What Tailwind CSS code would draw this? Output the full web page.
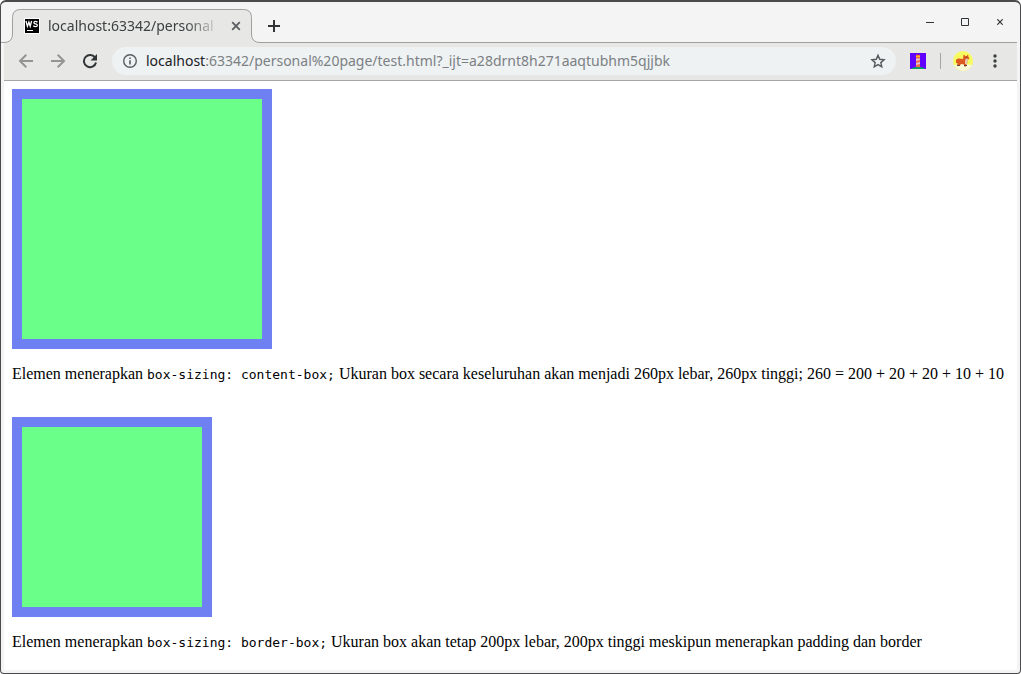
<!DOCTYPE html>
<html lang="id">
<head>
<meta charset="utf-8">
<meta name="viewport" content="width=device-width, initial-scale=1">
<title>Box sizing</title>
<script src="https://cdn.jsdelivr.net/npm/@tailwindcss/browser@4"></script>
</head>
<body class="bg-white">
<div class="flex min-h-screen flex-col rounded-t-md rounded-b-sm border border-t-2 border-[#4b4b4d] bg-[#f4f4f4] font-['Noto_Sans',sans-serif]">

  <header class="flex h-[41px] items-start justify-between">
    <div class="flex items-start">
      <div class="relative mt-[7px] h-[34px] w-[259px] shrink-0">
        <svg class="absolute inset-0" width="259" height="34" viewBox="0 0 259 34" aria-hidden="true">
          <path d="M0 33.500H3Q11.500 33.500 11.500 25V8.500Q11.500 .5 19.500 .5H242.500Q250.500 .5 250.500 8.500V25Q250.500 33.500 259 33.500V34H0Z" fill="#e7e7e5"/>
          <path d="M0 33.500H3Q11.500 33.500 11.500 25V8.500Q11.500 .5 19.500 .5H242.500Q250.500 .5 250.500 8.500V25Q250.500 33.500 259 33.500" fill="none" stroke="#a0a0a0"/>
        </svg>
        <div class="relative flex h-[34px] items-center pl-[23px]">
          <svg class="shrink-0" width="16" height="16" viewBox="0 0 16 16" role="img" aria-label="WebStorm">
            <rect width="16" height="16" fill="#fff"/><rect x="1" y="1" width="14" height="14" fill="#000"/>
            <path d="M2 3 3.400 8.300 4.900 4 6.200 8.300 7.600 3M13.500 4.200Q11.800 2.800 10.300 3.800 9.300 5 10.800 5.600L12.400 6.100Q14 7 12.800 8.200 11 9.200 9.300 7.700" fill="none" stroke="#fff" stroke-width="1.300"/>
            <path d="M3 12.500H9" stroke="#fff"/>
          </svg>
          <span class="ml-2 w-[172px] whitespace-nowrap mask-r-from-80% text-sm leading-5 text-[#3c4043]">localhost:63342/personal</span>
          <button class="ml-2 flex size-4 items-center justify-center" aria-label="Tutup tab">
            <svg width="10" height="10" viewBox="0 0 10 10" stroke="#5a5d60" stroke-width="1.800"><path d="m1.200 1.200 7.600 7.600M8.800 1.200 1.200 8.800"/></svg>
          </button>
        </div>
      </div>
      <button class="mt-4 flex h-4 w-6 shrink-0 items-center justify-center pl-1" aria-label="Tab baru">
        <svg width="12" height="12" viewBox="0 0 12 12" stroke="#303436" stroke-width="2"><path d="M6 0v12M0 6h12"/></svg>
      </button>
    </div>
    <div class="mt-3 flex gap-[19px] pr-3">
      <button class="flex size-4 items-center justify-center" aria-label="Kecilkan">
        <svg width="8" height="8" viewBox="0 0 8 8" stroke="#303436"><path d="M0 4.500h8"/></svg>
      </button>
      <button class="flex size-4 items-center justify-center" aria-label="Besarkan">
        <svg width="8" height="8" viewBox="0 0 8 8" fill="none" stroke="#303436"><path d="M.5.5h7v7h-7z"/></svg>
      </button>
      <button class="flex size-4 items-center justify-center" aria-label="Tutup">
        <svg width="6" height="6" viewBox="0 0 6 6" stroke="#303436" stroke-width="1.200"><path d="m.3.3 5.400 5.400M5.700.3.300 5.700"/></svg>
      </button>
    </div>
  </header>

  <nav class="mx-[3px] -mt-px flex h-[39px] items-center border-b border-[#a6a6a6] bg-[#e7e7e5] bg-[linear-gradient(#a0a0a0,#a0a0a0)] bg-[length:calc(100%-254px)_1px] bg-right-top bg-no-repeat pr-[14px] pl-[14px]" aria-label="Navigasi">
    <div class="flex shrink-0 gap-4">
      <button aria-label="Kembali"><svg width="16" height="16" viewBox="0 0 16 16" fill="none" stroke="#939493" stroke-width="2"><path d="M15 8H2.500M8.300 1.700 2 8l6.300 6.300"/></svg></button>
      <button aria-label="Maju"><svg width="16" height="16" viewBox="0 0 16 16" fill="none" stroke="#939493" stroke-width="2"><path d="M1 8h12.500M7.700 1.700 14 8l-6.300 6.300"/></svg></button>
      <button aria-label="Muat ulang"><svg width="16" height="16" viewBox="0 0 16 16"><path d="M13.300 5A6.100 6.100 0 1 0 14 9.500" fill="none" stroke="#303436" stroke-width="2"/><path d="M15 1v6.500H8.500Z" fill="#303436"/></svg></button>
    </div>
    <div class="ml-[14px] flex h-7 min-w-0 flex-1 items-center rounded-full bg-[#eef2f3] pr-[10px] pl-[10px]">
      <button class="shrink-0" aria-label="Informasi situs"><svg width="16" height="16" viewBox="0 0 16 16"><circle cx="8" cy="8" r="6.300" fill="none" stroke="#5a5d60" stroke-width="1.400"/><path d="M7.200 4.500h1.600V6H7.200zM7.200 7.200h1.600v4.300H7.200z" fill="#5a5d60"/></svg></button>
      <div class="ml-2 min-w-0 flex-1 overflow-hidden text-sm leading-5 whitespace-nowrap text-[#7c8083]"><span class="text-[#202124]">localhost</span>:63342/personal%20page/test.html?_ijt=a28drnt8h271aaqtubhm5qjjbk</div>
      <button class="shrink-0" aria-label="Tandai halaman"><svg width="16" height="16" viewBox="0 0 16 16" fill="none" stroke="#55595c" stroke-width="1.400"><path d="m8 2.300 1.700 4 4.400.4-3.300 2.900 1 4.300L8 11.600l-3.800 2.300 1-4.300-3.300-2.900 4.400-.4Z"/></svg></button>
    </div>
    <button class="ml-[14px] shrink-0" aria-label="Ekstensi mercusuar">
      <svg width="16" height="16" viewBox="0 0 16 16"><path fill="#6200ff" d="M0 0h16v16H0z"/><path d="M1 16q1-2 7-2t7 2Z" fill="#08a45c"/><path d="M6 4h4v10H6z" fill="#f5694a"/><path d="M6 5.500h4V7L6 8zM6 10l4-1v2l-4 1z" fill="#dfbfd2"/><path d="M6 2h4v2H6z" fill="#ffb52e"/><path d="M6 2.500 8 1l2 1.500z" fill="#e43d42"/></svg>
    </button>
    <div class="ml-[14px] h-4 w-px shrink-0 bg-[#a5a5a5]"></div>
    <button class="ml-3 shrink-0" aria-label="Profil">
      <svg width="20" height="20" viewBox="0 0 20 20"><circle cx="10" cy="10" r="10" fill="#f7fb5f"/><path d="M1 14q9-2 18 0a10 10 0 0 1-18 0Z" fill="#f9fad8"/><path d="M3 9q1-2 3-1.500l4 .5.500-4.500 2 1.500h1l1.500-1.500.5 2.500 1 1.500-2 1.500-.5 4.500h-1v2h-2v-2l-3-.5-1 1.500H4l.5-2.500L3 12Z" fill="#dc5a22"/><path d="m12 9 1.500-1.500 2 .5-1 2-.5 3h-2z" fill="#e6c7a9"/><path d="M13 6h1v1h-1zM4 14h3v1H4zM11 14h3v1h-3z" fill="#68413a"/></svg>
    </button>
    <button class="ml-[14px] shrink-0" aria-label="Menu"><svg width="16" height="16" viewBox="0 0 16 16" fill="#3c4043"><circle cx="8" cy="3" r="1.700"/><circle cx="8" cy="8" r="1.700"/><circle cx="8" cy="13" r="1.700"/></svg></button>
  </nav>

  <main class="mx-[3px] mb-[3px] flex-1 bg-white p-2 font-['Liberation_Serif',serif] text-base leading-[18px] text-black">
    <div class="box-content size-[200px] border-10 border-[#6f80f3] bg-[#69ff89] p-5"></div>
    <p class="my-4">Elemen menerapkan <code class="font-['DejaVu_Sans_Mono',monospace] text-[13px] leading-none">box-sizing: content-box;</code> Ukuran box secara keseluruhan akan menjadi 260px lebar, 260px tinggi; 260 = 200 + 20 + 20 + 10 + 10</p>
    <br>
    <div class="box-border size-[200px] border-10 border-[#6f80f3] bg-[#69ff89] p-5"></div>
    <p class="mt-4">Elemen menerapkan <code class="font-['DejaVu_Sans_Mono',monospace] text-[13px] leading-none">box-sizing: border-box;</code> Ukuran box akan tetap 200px lebar, 200px tinggi meskipun menerapkan padding dan border</p>
  </main>
</div>
</body>
</html>
